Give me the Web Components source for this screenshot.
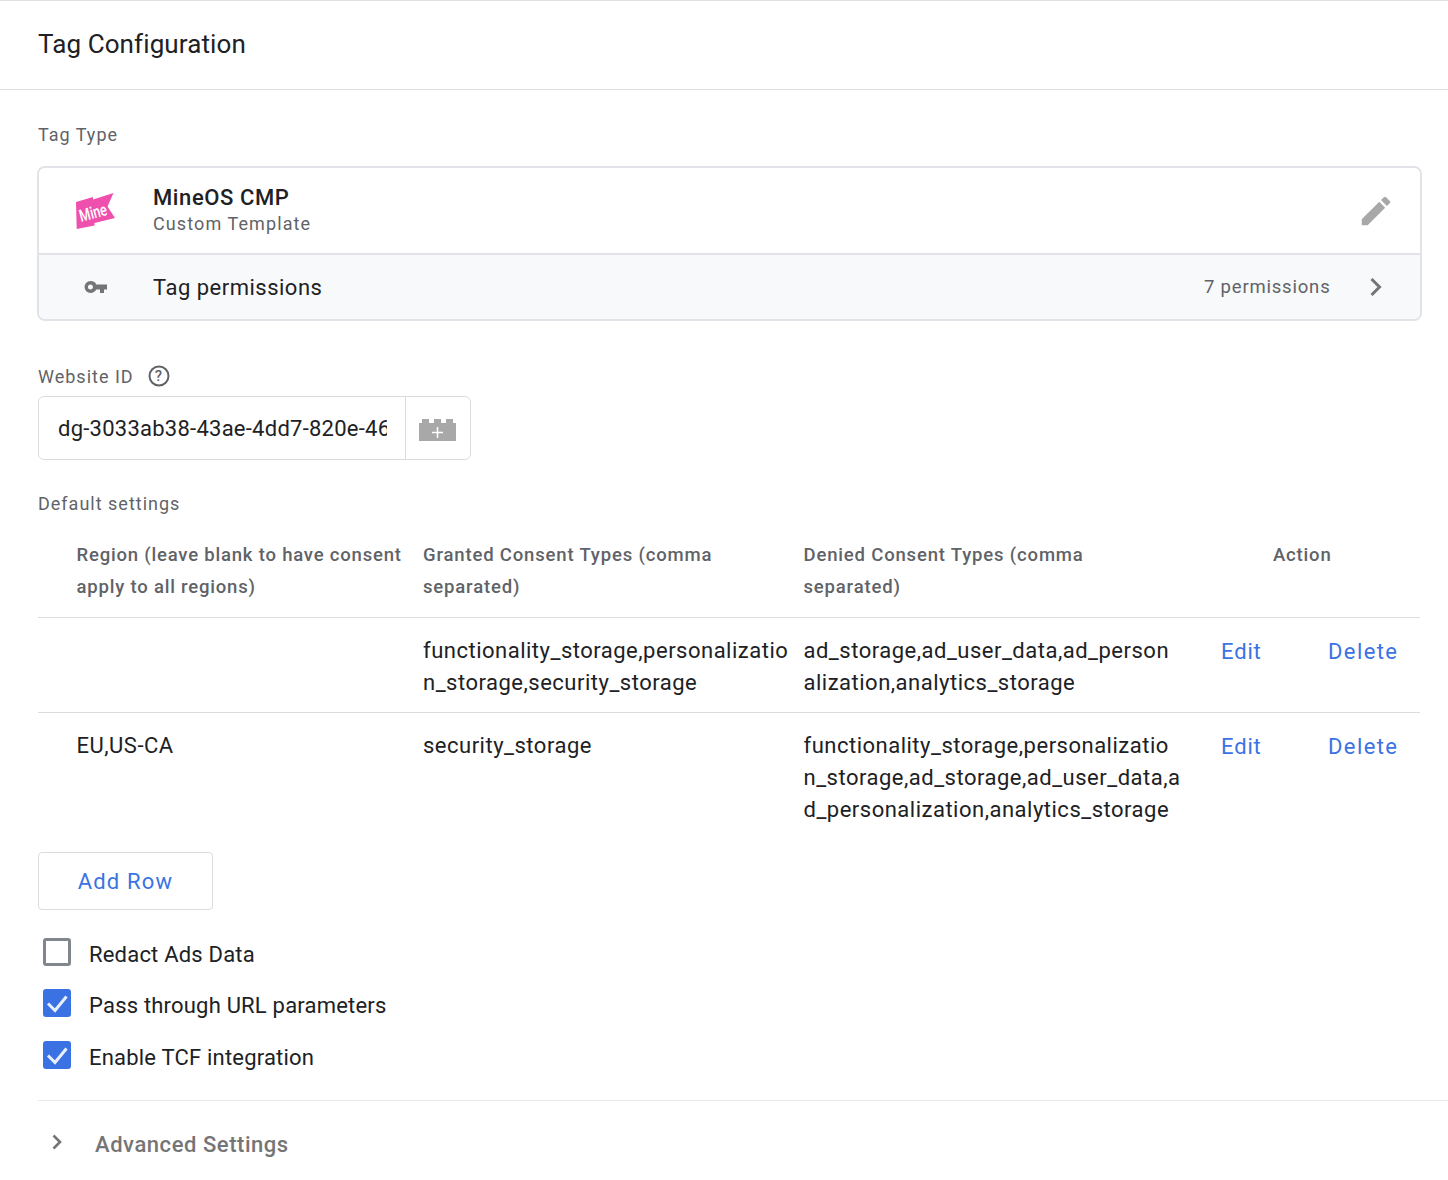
<!DOCTYPE html>
<html>
<head>
<meta charset="utf-8">
<title>Tag Configuration</title>
<style>
    html, body { margin: 0; padding: 0; background: #fff; }
    body { font-family: Roboto, "Liberation Sans", sans-serif; color: #202124; height: 1180px; overflow: hidden; }
</style>
</head>
<body>
<tag-config-page>
    <tag-type-card></tag-type-card>
    <website-field></website-field>
    <consent-table></consent-table>
    <add-row-button></add-row-button>
    <check-list>
        <check-row>Redact Ads Data</check-row>
        <check-row checked>Pass through URL parameters</check-row>
        <check-row checked>Enable TCF integration</check-row>
    </check-list>
</tag-config-page>

<script>
class TagConfigPage extends HTMLElement {
    connectedCallback() {
        this.attachShadow({ mode: 'open' });
        this.shadowRoot.innerHTML = `
            <style>
                :host { display: block; border-top: 1px solid #e0e0e0; }
                header { box-sizing: border-box; padding: 27px 38px 0; border-bottom: 1px solid #dadce0; height: 89px; font-size: 26px; line-height: 32px; letter-spacing: .1px; color: #202124; }
                .body { padding: 0 0 0 38px; }
                .content { padding-right: 27px; }
                .more { margin-top: 31px; border-top: 1px solid #e8eaed; height: 87px; display: flex; align-items: center; color: #757575; }
                .more svg { margin-left: 9px; margin-right: 28px; margin-top: -5px; }
                .more span { font-size: 22px; font-weight: 500; letter-spacing: .55px; }
            </style>
            <header>Tag Configuration</header>
            <div class="body">
                <div class="content"><slot></slot></div>
                <div class="more">
                    <svg width="20" height="20" viewBox="0 0 20 20"><path d="M6.500 3.500l6.500 6.500-6.500 6.500" fill="none" stroke="#757575" stroke-width="2.600"/></svg>
                    <span>Advanced Settings</span>
                </div>
            </div>`;
    }
}

class TagTypeCard extends HTMLElement {
    connectedCallback() {
        this.attachShadow({ mode: 'open' });
        this.shadowRoot.innerHTML = `
            <style>
                :host { display: block; }
                .label { padding-top: 33px; font-size: 18px; line-height: 24px; letter-spacing: 1px; color: #5f6368; margin-bottom: 19px; }
                .card { border: 2px solid #e2e3e8; border-radius: 8px; overflow: hidden; width: 1385px; margin-left: -1px; box-sizing: border-box; }
                .top { height: 85px; display: flex; align-items: center; background: #fff; border-bottom: 2px solid #e2e3e8; }
                .icon { width: 114px; display: flex; justify-content: center; flex: none; }
                .title { margin-top: -2px; }
                .name { font-size: 22px; line-height: 28px; font-weight: 500; letter-spacing: .6px; color: #202124; }
                .sub { font-size: 18px; line-height: 24px; letter-spacing: 1.1px; color: #5f6368; }
                .pencil { margin-left: auto; margin-right: 25.500px; }
                .bottom { height: 64px; display: flex; align-items: center; background: #f8f9fa; }
                .perm { font-size: 22px; letter-spacing: .5px; color: #202124; }
                .count { margin-left: auto; margin-right: 37px; font-size: 18.500px; letter-spacing: .8px; color: #5f6368; }
                .chev { margin-right: 36.500px; }
            </style>
            <div class="label">Tag Type</div>
            <div class="card">
                <div class="top">
                    <div class="icon">
                        <svg width="40" height="36" viewBox="0 0 40 36" style="overflow: visible">
                            <path d="M0 9L17 4V6.500L37.500 0 31.500 13.500 39 25 18.500 30V32.500L.7 36Z" fill="#ef50ad"/>
                            <text transform="translate(17 19.500) rotate(-15) scale(.74 1)" y="6" text-anchor="middle" font-family="Roboto, sans-serif" font-size="17" font-weight="500" fill="#fff">Mine</text>
                        </svg>
                    </div>
                    <div class="title">
                        <div class="name">MineOS CMP</div>
                        <div class="sub">Custom Template</div>
                    </div>
                    <svg class="pencil" width="38" height="38" viewBox="0 0 24 24"><path d="M3 17.250V21h3.750L17.810 9.940l-3.750-3.750L3 17.250zM20.710 7.040a1 1 0 0 0 0-1.410l-2.340-2.340a1 1 0 0 0-1.410 0l-1.830 1.830 3.750 3.750 1.830-1.830z" fill="#a8a8a8"/></svg>
                </div>
                <div class="bottom">
                    <div class="icon">
                        <svg width="26" height="14" viewBox="0 0 26 14"><path d="M13.300 4.500C12.300 1.900 9.900 1 7.500 1A6 6 0 0 0 7.500 13c2.400 0 4.800-1.400 5.800-3.500H17V13h4V9.500h3v-5zM7.500 9.500a2.500 2.500 0 1 1 0-5 2.500 2.500 0 0 1 0 5z" fill="#757575"/></svg>
                    </div>
                    <div class="perm">Tag permissions</div>
                    <div class="count">7 permissions</div>
                    <svg class="chev" width="16" height="20" viewBox="0 0 16 20"><path d="M3.500 2l8 8-8 8" fill="none" stroke="#757575" stroke-width="3"/></svg>
                </div>
            </div>`;
    }
}

class WebsiteField extends HTMLElement {
    connectedCallback() {
        this.attachShadow({ mode: 'open' });
        this.shadowRoot.innerHTML = `
            <style>
                :host { display: block; }
                .label { margin-top: 43px; display: flex; align-items: center; gap: 14px; height: 24px; font-size: 18px; letter-spacing: 1px; color: #5f6368; }
                .input { margin-top: 8px; width: 433px; height: 64px; box-sizing: border-box; border: 1px solid #dadce0; border-radius: 6px; display: flex; }
                .val { width: 366px; box-sizing: border-box; padding: 0 18px 0 19px; font-size: 22px; line-height: 64px; letter-spacing: .25px; color: #202124; }
                .val div { white-space: nowrap; overflow: hidden; height: 62px; }
                .btn { flex: 1; border-left: 1px solid #dadce0; display: flex; align-items: center; justify-content: center; }
                .btn svg { margin: 3px 1px 0 0; }
            </style>
            <div class="label"><span>Website ID</span>
                <svg width="22" height="22" viewBox="0 0 22 22"><circle cx="11" cy="11" r="9.500" fill="none" stroke="#5f6368" stroke-width="2"/><text x="11" y="16.200" text-anchor="middle" font-family="Roboto, sans-serif" font-size="15" font-weight="500" fill="#5f6368">?</text></svg>
            </div>
            <div class="input">
                <div class="val"><div>dg-3033ab38-43ae-4dd7-820e-46</div></div>
                <div class="btn">
                    <svg width="37" height="22" viewBox="0 0 37 22"><path d="M0 4h3V0h7v4h5V0h7v4h5V0h7v4h3v18H0z" fill="#a8a8a8"/><path d="M18.500 8v11M13 13.500h11" stroke="#fff" stroke-width="1.500"/></svg>
                </div>
            </div>`;
    }
}

class ConsentTable extends HTMLElement {
    connectedCallback() {
        this.attachShadow({ mode: 'open' });
        const rows = [
            ['', 'functionality_storage,personalization_storage,security_storage', 'ad_storage,ad_user_data,ad_personalization,analytics_storage'],
            ['EU,US-CA', 'security_storage', 'functionality_storage,personalization_storage,ad_storage,ad_user_data,ad_personalization,analytics_storage']
        ];
        const body = rows.map(r => `
            <div class="row">
                <div class="c c1">${r[0]}</div>
                <div class="c c2">${r[1]}</div>
                <div class="c c3">${r[2]}</div>
                <a class="edit">Edit</a>
                <a class="del">Delete</a>
            </div>`).join('');
        this.shadowRoot.innerHTML = `
            <style>
                :host { display: block; width: 1382px; }
                .label { margin-top: 32px; font-size: 18px; line-height: 24px; letter-spacing: 1px; color: #5f6368; }
                .row { display: grid; grid-template-columns: 385px 380.500px 417.500px 107px 92px; border-top: 1px solid #dadce0; padding: 17px 0 13px; font-size: 22px; line-height: 32px; letter-spacing: .5px; color: #202124; }
                .head { border-top: 0; padding: 23px 0 14px; font-size: 18.500px; letter-spacing: .83px; font-weight: 500; color: #5f6368; }
                .c { word-break: break-all; padding-right: 14px; }
                .c1 { padding-left: 38.500px; }
                .c3 { padding-right: 40.300px; }
                .head .c { word-break: normal; padding-right: 0; }
                .head .c1 { padding-right: 0; letter-spacing: .8px; }
                .head .c2 { padding-right: 50px; }
                .head .c3 { padding-right: 90px; }
                .head .act { grid-column: 4 / 6; padding-left: 52px; }
                a { color: #3b73e3; font-size: 22px; padding-top: 1px; }
                .edit { letter-spacing: .85px; }
                .del { letter-spacing: 1.4px; }
            </style>
            <div class="label">Default settings</div>
            <div class="row head">
                <div class="c c1">Region (leave blank to have consent apply to all regions)</div>
                <div class="c c2">Granted Consent Types (comma separated)</div>
                <div class="c c3">Denied Consent Types (comma separated)</div>
                <div class="act">Action</div>
            </div>
            ${body}`;
    }
}

class AddRowButton extends HTMLElement {
    connectedCallback() {
        this.attachShadow({ mode: 'open' });
        this.shadowRoot.innerHTML = `
            <style>
                :host { display: block; margin-top: 13px; }
                button { all: unset; display: flex; align-items: center; justify-content: center; box-sizing: border-box; width: 175px; height: 58px; padding-top: 1px; border: 1px solid #dadce0; border-radius: 4px; color: #3b73e3; font-size: 22px; letter-spacing: 1.2px; font-family: inherit; }
            </style>
            <button>Add Row</button>`;
    }
}

class CheckList extends HTMLElement {
    connectedCallback() {
        this.attachShadow({ mode: 'open' });
        this.shadowRoot.innerHTML = `
            <style>
                :host { display: flex; flex-direction: column; gap: 23px; margin-top: 28px; }
                ::slotted(:last-child) { margin-top: 1px; }
            </style>
            <slot></slot>`;
    }
}

class CheckRow extends HTMLElement {
    connectedCallback() {
        this.attachShadow({ mode: 'open' });
        const on = this.hasAttribute('checked');
        this.shadowRoot.innerHTML = `
            <style>
                :host { display: flex; align-items: center; gap: 18px; height: 28px; padding-left: 5px; font-size: 22px; color: #202124; letter-spacing: .2px; }
                .box { width: 28px; height: 28px; box-sizing: border-box; border-radius: 3px; flex: none; }
                .off { border: 3px solid #80868b; }
                .on { background: #3b72e3; }
                svg { display: block; }
                span { padding-top: 5px; }
            </style>
            <div class="box ${on ? 'on' : 'off'}">
                ${on ? '<svg width="28" height="28" viewBox="0 0 28 28"><path d="M5 14.500l7 7L23.500 7.500" fill="none" stroke="#e8effc" stroke-width="3"/></svg>' : ''}
            </div>
            <span><slot></slot></span>`;
    }
}

customElements.define('tag-config-page', TagConfigPage);
customElements.define('tag-type-card', TagTypeCard);
customElements.define('website-field', WebsiteField);
customElements.define('consent-table', ConsentTable);
customElements.define('add-row-button', AddRowButton);
customElements.define('check-list', CheckList);
customElements.define('check-row', CheckRow);
</script>
</body>
</html>
